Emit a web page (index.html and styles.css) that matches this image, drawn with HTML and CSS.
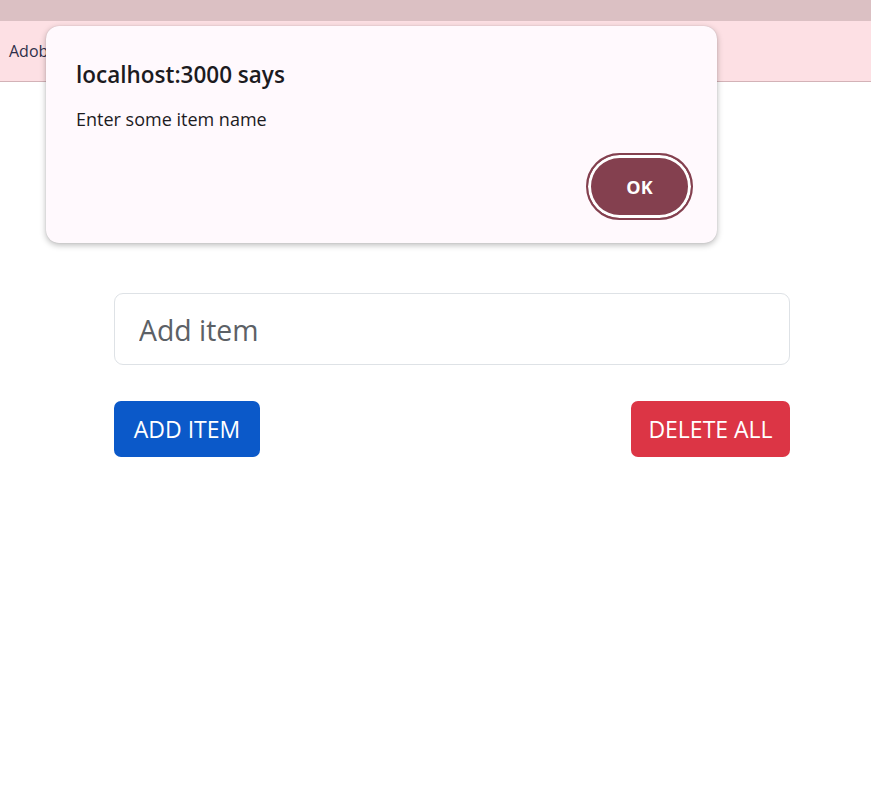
FILE: index.html
```html
<!DOCTYPE html>
<html lang="en">
<head>
<meta charset="utf-8">
<title>Todo</title>
<link rel="stylesheet" href="styles.css">
</head>
<body>
<div class="tabstrip"></div>
<div class="bookmarks"><span class="bm-item">Adobe Acrobat</span></div>
<main class="app">
  <input class="item-input" type="text" placeholder="Add item">
  <div class="actions">
    <button class="btn btn-add">ADD ITEM</button>
    <button class="btn btn-delete">DELETE ALL</button>
  </div>
</main>
<div class="dialog" role="alertdialog">
  <h1 class="dialog-title">localhost:3000 says</h1>
  <p class="dialog-msg">Enter some item name</p>
  <div class="dialog-footer">
    <button class="ok-btn">OK</button>
  </div>
</div>
</body>
</html>
```

FILE: styles.css
```css
html, body {
  margin: 0;
  padding: 0;
  background: #ffffff;
  font-family: "Open Sans", "Noto Sans", sans-serif;
}
.tabstrip {
  height: 21px;
  background: #dbc0c3;
}
.bookmarks {
  height: 60px;
  background: #fde0e4;
  border-bottom: 1px solid #d3b2b7;
  display: flex;
  align-items: center;
  padding-left: 9px;
}
.bm-item {
  font-size: 16px;
  color: #2f2f4a;
}
.app {
  width: 676px;
  margin: 211px 0 0 114px;
}
.item-input {
  display: block;
  width: 100%;
  height: 72px;
  box-sizing: border-box;
  border: 1px solid #dee2e6;
  border-radius: 9px;
  padding: 2px 24px 0;
  font-family: inherit;
  font-size: 28.4px;
  color: #212529;
  outline: none;
}
.item-input::placeholder {
  color: #5c6166;
}
.actions {
  display: flex;
  justify-content: space-between;
  margin-top: 36px;
}
.btn {
  height: 56px;
  border: none;
  border-radius: 7px;
  padding: 0;
  font-family: inherit;
  font-size: 23px;
  color: #ffffff;
}
.btn-add {
  width: 146px;
  background: #0b59c9;
}
.btn-delete {
  width: 159px;
  background: #dc3545;
}
.dialog {
  position: absolute;
  left: 46px;
  top: 26px;
  width: 671px;
  height: 217px;
  box-sizing: border-box;
  background: #fff9fd;
  border-radius: 13px;
  box-shadow: 0 2px 6px rgba(0,0,0,0.28), 0 0 1px rgba(0,0,0,0.2);
  padding: 34px 24px 0 30px;
}
.dialog-title {
  margin: 0;
  font-size: 22.5px;
  font-weight: 600;
  line-height: 30px;
  color: #1c1b1f;
}
.dialog-msg {
  margin: 19px 0 0;
  font-size: 18px;
  line-height: 20px;
  color: #1c1b1f;
}
.dialog-footer {
  display: flex;
  justify-content: flex-end;
  margin-top: 24px;
}
.ok-btn {
  width: 107px;
  height: 67px;
  box-sizing: border-box;
  border-radius: 34px;
  border: 2px solid #84404f;
  box-shadow: inset 0 0 0 3px #ffffff;
  background: #84404f;
  color: #ffffff;
  font-family: inherit;
  font-size: 18px;
  font-weight: 700;
}
```
